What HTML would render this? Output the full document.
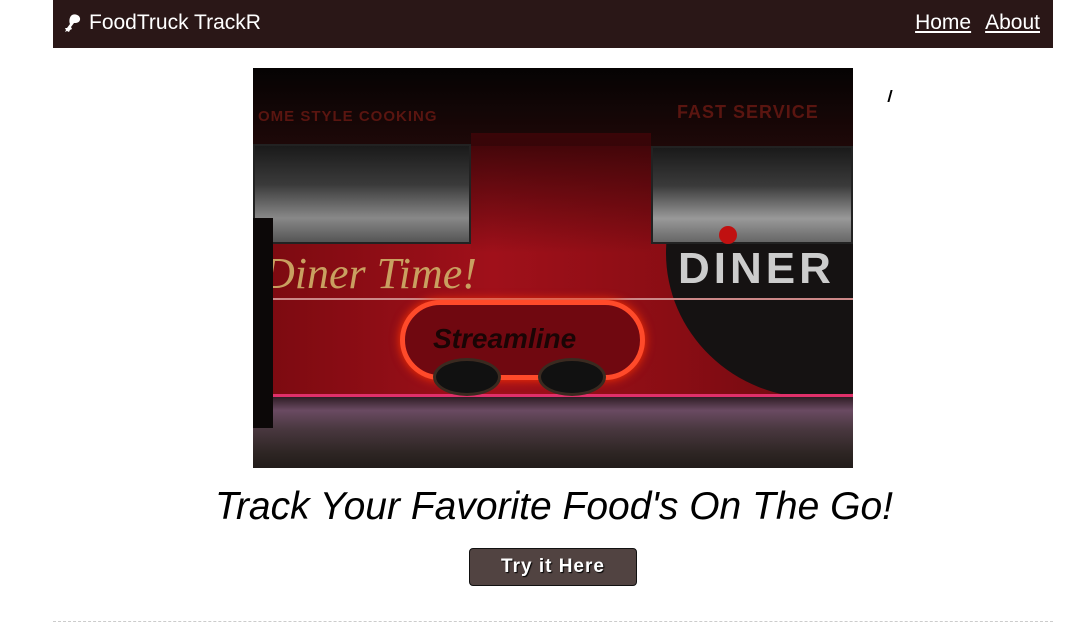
<!DOCTYPE html>
<html><head><meta charset="utf-8"><style>
*{margin:0;padding:0;box-sizing:border-box}
body{width:1088px;height:638px;background:#fff;font-family:"Liberation Sans",sans-serif;position:relative;overflow:hidden}
.nav{position:absolute;left:53px;top:0;width:1000px;height:48px;background:#2a1717;color:#fff}
.brand{position:absolute;left:36px;top:11px;font-size:21px}
.links{position:absolute;right:13px;top:11px;font-size:21px}
.links span{text-decoration:underline;margin-left:14px}
.img{position:absolute;left:253px;top:68px;width:600px;height:400px;background:#0b0606;overflow:hidden}
.img div{position:absolute}
h1{position:absolute;left:0;width:1108px;top:485px;text-align:center;font-style:italic;font-weight:normal;font-size:39px;color:#000}
.btn{position:absolute;left:469px;top:548px;width:168px;height:38px;background:#514341;border:1px solid #111;border-radius:4px;color:#fff;font-weight:bold;font-size:19px;letter-spacing:1px;text-align:center;line-height:36px;text-shadow:1px 1px 1px #000}
.hr{position:absolute;left:53px;top:621px;width:1000px;border-top:1px dashed #ccc}
</style></head><body>
<div class="nav">
<svg style="position:absolute;left:10px;top:13px" width="20" height="20" viewBox="0 0 20 20"><path d="M9 2c4-2 9 1 8 5-1 3-4 3-6 3l-3 4 1 2-2 1-1 2-2-1-2 1 1-2-1-2 2 0 3-4C6 9 6 4 9 2z" fill="#fff"/></svg>
<div class="brand">FoodTruck TrackR</div><div class="links"><span>Home</span><span>About</span></div></div>
<div class="img">
<div style="left:0;top:0;width:600px;height:78px;background:linear-gradient(#050303,#1e0808)"></div>
<div style="left:5px;top:40px;color:#5a1510;font-weight:bold;font-size:15px;letter-spacing:1px">OME STYLE COOKING</div>
<div style="left:424px;top:34px;color:#5a1510;font-weight:bold;font-size:18px;letter-spacing:1px">FAST SERVICE</div>
<div style="left:0;top:78px;width:600px;height:250px;background:linear-gradient(90deg,#7a0a10,#a0101a 40%,#8a0d14 70%,#6a0a10)"></div>
<div style="left:218px;top:65px;width:180px;height:120px;background:linear-gradient(#3a0508,rgba(160,16,26,0))"></div>
<div style="left:0;top:76px;width:218px;height:100px;background:linear-gradient(#1a1a1a,#3a3a3a 40%,#888 75%,#555);border:2px solid #222"></div>
<div style="left:398px;top:78px;width:202px;height:98px;background:linear-gradient(#1a1a1a,#3a3a3a 40%,#999 75%,#666);border:2px solid #222"></div>
<div style="left:413px;top:40px;width:300px;height:290px;border-radius:50%;background:#151212;clip-path:inset(136px 0 0 0)"></div>
<div style="left:425px;top:176px;color:#ccc;font-weight:bold;font-size:44px;letter-spacing:4px">DINER</div>
<div style="left:466px;top:158px;width:18px;height:18px;border-radius:50%;background:#c01010"></div>
<div style="left:10px;top:180px;color:#c9a060;font-style:italic;font-size:44px;font-family:'Liberation Serif',serif">Diner Time!</div>
<div style="left:0;top:230px;width:600px;height:2px;background:#c88"></div>
<div style="left:147px;top:232px;width:245px;height:80px;border-radius:40px;background:#700810;border:5px solid #ff4a2a;box-shadow:0 0 10px #f30"></div>
<div style="left:180px;top:255px;color:#1a0505;font-style:italic;font-weight:bold;font-size:28px">Streamline</div>
<div style="left:0;top:328px;width:600px;height:72px;background:linear-gradient(#2a1a20,#6a4a62 20%,#4a3840 45%,#2d2523 80%,#221c1a)"></div>
<div style="left:0;top:326px;width:600px;height:3px;background:#e0306a"></div>
<div style="left:180px;top:290px;width:68px;height:38px;border-radius:50%;background:#111;border:3px solid #3a2a20"></div>
<div style="left:285px;top:290px;width:68px;height:38px;border-radius:50%;background:#111;border:3px solid #3a2a20"></div>
<div style="left:0;top:150px;width:20px;height:210px;background:#0c0808"></div>
</div>
<div style="position:absolute;left:889px;top:90px;width:2px;height:12px;background:#000;transform:skewX(-15deg)"></div>
<h1>Track Your Favorite Food's On The Go!</h1>
<div class="btn">Try it Here</div>
<div class="hr"></div>
</body></html>
